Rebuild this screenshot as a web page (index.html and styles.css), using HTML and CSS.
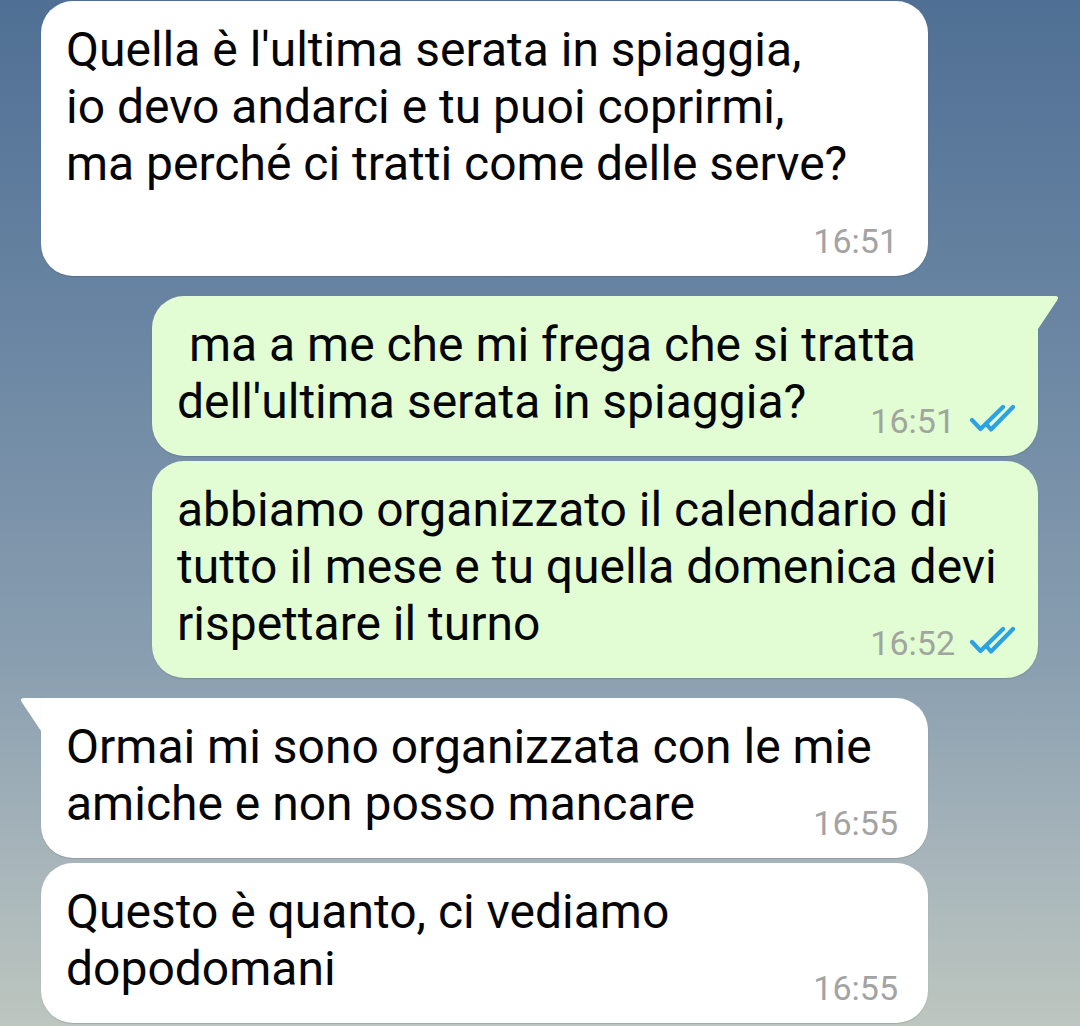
FILE: index.html
```html
<!DOCTYPE html>
<html lang="it">
<head>
    <meta charset="UTF-8">
    <meta name="viewport" content="width=device-width, initial-scale=1.0">
    <title>Chat</title>
    <link rel="stylesheet" href="styles.css">
</head>
<body>
    <div class="chat">
        <div class="row in">
            <div class="bubble">
                <p class="text">Quella è l'ultima serata in spiaggia,<br>io devo andarci e tu puoi coprirmi,<br>ma perché ci tratti come delle serve?</p>
                <div class="meta"><span class="time">16:51</span></div>
            </div>
        </div>

        <div class="row out first">
            <div class="bubble tailed">
                <p class="text">&nbsp;ma a me che mi frega che si tratta<br>dell'ultima serata in spiaggia?</p>
                <div class="meta inline">
                    <span class="time">16:51</span>
                    <svg class="check" width="46" height="28" viewBox="0 0 46 28"><path d="M3 16 L11.5 25 L34 3 M19 22 L22 25.5 L44 3"/></svg>
                </div>
            </div>
            <svg class="tail" width="22" height="34" viewBox="0 0 22 34"><path d="M0 0 H17 Q22 0 19 4.5 L0 33 Z"/></svg>
        </div>

        <div class="row out">
            <div class="bubble">
                <p class="text">abbiamo organizzato il calendario di<br>tutto il mese e tu quella domenica devi<br>rispettare il turno</p>
                <div class="meta inline">
                    <span class="time">16:52</span>
                    <svg class="check" width="46" height="28" viewBox="0 0 46 28"><path d="M3 16 L11.5 25 L34 3 M19 22 L22 25.5 L44 3"/></svg>
                </div>
            </div>
        </div>

        <div class="row in first">
            <svg class="tail" width="21" height="34" viewBox="0 0 21 34"><path d="M21 0 H4 Q-1 0 2 4.5 L21 33 Z"/></svg>
            <div class="bubble tailed">
                <p class="text">Ormai mi sono organizzata con le mie<br>amiche e non posso mancare</p>
                <div class="meta inline"><span class="time">16:55</span></div>
            </div>
        </div>

        <div class="row in">
            <div class="bubble">
                <p class="text">Questo è quanto, ci vediamo<br>dopodomani</p>
                <div class="meta inline"><span class="time">16:55</span></div>
            </div>
        </div>
    </div>
</body>
</html>
```

FILE: styles.css
```css
html, body {
    margin: 0;
    height: 100%;
}
body {
    font-family: Roboto, "Noto Sans", Arial, sans-serif;
    background: linear-gradient(to bottom, #4f6f94 0%, #6884a2 30%, #8a9fb0 65%, #a6b4ba 83%, #bdc6bf 100%);
    overflow: hidden;
}
.chat {
    display: flex;
    flex-direction: column;
    gap: 5px;
    padding-top: 1px;
}
.row {
    display: flex;
    align-items: flex-start;
}
.row.first {
    margin-top: 15px;
}
.row.in {
    padding-left: 41px;
}
.row.in.first {
    padding-left: 20px;
}
.row.out {
    justify-content: flex-end;
    padding-right: 42px;
}
.row.out.first {
    padding-right: 20px;
}
.bubble {
    width: 887px;
    box-sizing: border-box;
    padding: 20px 30px 17px 25px;
    border-radius: 32px;
    background: #fff;
    box-shadow: 0 1px 1px rgba(0,0,0,0.14);
}
.out .bubble {
    width: 886px;
    padding-right: 23px;
    background: #e2fcd4;
}
.in .bubble.tailed {
    border-top-left-radius: 0;
}
.out .bubble.tailed {
    border-top-right-radius: 0;
}
.tail {
    display: block;
    flex: none;
}
.in .tail {
    fill: #fff;
}
.out .tail {
    fill: #e2fcd4;
}
.text {
    margin: 0;
    font-size: 48px;
    line-height: 57px;
    color: #050505;
}
.meta {
    display: flex;
    justify-content: flex-end;
    align-items: center;
    gap: 14px;
    height: 36px;
    line-height: 36px;
    margin-top: 31px;
    font-size: 34px;
    color: #a3a3a3;
}
.meta.inline {
    margin-top: -27px;
}
.out .meta {
    color: #a0a69d;
}
.check {
    display: block;
    margin-bottom: 6px;
    fill: none;
    stroke: #2ba2e3;
    stroke-width: 4.2;
    stroke-linecap: round;
    stroke-linejoin: round;
}
```
